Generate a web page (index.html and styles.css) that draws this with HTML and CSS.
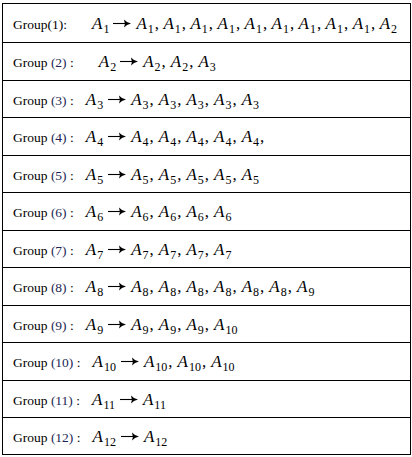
FILE: index.html
```html
<!DOCTYPE html>
<html>
<head>
<meta charset="utf-8">
<link rel="stylesheet" href="styles.css">
</head>
<body>
<div class="table">
  <div class="row r38"><span class="lbl">Group(1):</span><span class="m m1"><span class="v">A<sub>1</sub></span><svg class="ar ar0" width="18" height="10" viewBox="0 0 18 10"><path d="M0 5.5H15" stroke="#000" stroke-width="1.1"/><path d="M11 1.5Q13.5 4.6 18 5.5Q13.5 6.4 11 9.5Q12.6 5.5 11 1.5Z" fill="#000"/></svg><span class="v">A<sub>1</sub></span><span class="c">,</span><span class="v">A<sub>1</sub></span><span class="c">,</span><span class="v">A<sub>1</sub></span><span class="c">,</span><span class="v">A<sub>1</sub></span><span class="c">,</span><span class="v">A<sub>1</sub></span><span class="c">,</span><span class="v">A<sub>1</sub></span><span class="c">,</span><span class="v">A<sub>1</sub></span><span class="c">,</span><span class="v">A<sub>1</sub></span><span class="c">,</span><span class="v">A<sub>1</sub></span><span class="c">,</span><span class="v">A<sub>2</sub></span></span></div>
  <div class="row r37"><span class="lbl">Group <span class="n">(2)</span> :</span><span class="m m2"><span class="v">A<sub>2</sub></span><svg class="ar ar0" width="18" height="10" viewBox="0 0 18 10"><path d="M0 5.5H15" stroke="#000" stroke-width="1.1"/><path d="M11 1.5Q13.5 4.6 18 5.5Q13.5 6.4 11 9.5Q12.6 5.5 11 1.5Z" fill="#000"/></svg><span class="v">A<sub>2</sub></span><span class="c">,</span><span class="v">A<sub>2</sub></span><span class="c">,</span><span class="v">A<sub>3</sub></span></span></div>
  <div class="row r36"><span class="lbl">Group <span class="n">(3)</span> :</span><span class="m"><span class="v">A<sub>3</sub></span><svg class="ar" width="18" height="10" viewBox="0 0 18 10"><path d="M0 5.5H15" stroke="#000" stroke-width="1.1"/><path d="M11 1.5Q13.5 4.6 18 5.5Q13.5 6.4 11 9.5Q12.6 5.5 11 1.5Z" fill="#000"/></svg><span class="v">A<sub>3</sub></span><span class="c">,</span><span class="v">A<sub>3</sub></span><span class="c">,</span><span class="v">A<sub>3</sub></span><span class="c">,</span><span class="v">A<sub>3</sub></span><span class="c">,</span><span class="v">A<sub>3</sub></span></span></div>
  <div class="row r37"><span class="lbl">Group <span class="n">(4)</span> :</span><span class="m"><span class="v">A<sub>4</sub></span><svg class="ar" width="18" height="10" viewBox="0 0 18 10"><path d="M0 5.5H15" stroke="#000" stroke-width="1.1"/><path d="M11 1.5Q13.5 4.6 18 5.5Q13.5 6.4 11 9.5Q12.6 5.5 11 1.5Z" fill="#000"/></svg><span class="v">A<sub>4</sub></span><span class="c">,</span><span class="v">A<sub>4</sub></span><span class="c">,</span><span class="v">A<sub>4</sub></span><span class="c">,</span><span class="v">A<sub>4</sub></span><span class="c">,</span><span class="v">A<sub>4</sub></span><span class="c">,</span></span></div>
  <div class="row r36"><span class="lbl">Group <span class="n">(5)</span> :</span><span class="m"><span class="v">A<sub>5</sub></span><svg class="ar" width="18" height="10" viewBox="0 0 18 10"><path d="M0 5.5H15" stroke="#000" stroke-width="1.1"/><path d="M11 1.5Q13.5 4.6 18 5.5Q13.5 6.4 11 9.5Q12.6 5.5 11 1.5Z" fill="#000"/></svg><span class="v">A<sub>5</sub></span><span class="c">,</span><span class="v">A<sub>5</sub></span><span class="c">,</span><span class="v">A<sub>5</sub></span><span class="c">,</span><span class="v">A<sub>5</sub></span><span class="c">,</span><span class="v">A<sub>5</sub></span></span></div>
  <div class="row r37"><span class="lbl">Group <span class="n">(6)</span> :</span><span class="m"><span class="v">A<sub>6</sub></span><svg class="ar" width="18" height="10" viewBox="0 0 18 10"><path d="M0 5.5H15" stroke="#000" stroke-width="1.1"/><path d="M11 1.5Q13.5 4.6 18 5.5Q13.5 6.4 11 9.5Q12.6 5.5 11 1.5Z" fill="#000"/></svg><span class="v">A<sub>6</sub></span><span class="c">,</span><span class="v">A<sub>6</sub></span><span class="c">,</span><span class="v">A<sub>6</sub></span><span class="c">,</span><span class="v">A<sub>6</sub></span></span></div>
  <div class="row r36"><span class="lbl">Group <span class="n">(7)</span> :</span><span class="m"><span class="v">A<sub>7</sub></span><svg class="ar" width="18" height="10" viewBox="0 0 18 10"><path d="M0 5.5H15" stroke="#000" stroke-width="1.1"/><path d="M11 1.5Q13.5 4.6 18 5.5Q13.5 6.4 11 9.5Q12.6 5.5 11 1.5Z" fill="#000"/></svg><span class="v">A<sub>7</sub></span><span class="c">,</span><span class="v">A<sub>7</sub></span><span class="c">,</span><span class="v">A<sub>7</sub></span><span class="c">,</span><span class="v">A<sub>7</sub></span></span></div>
  <div class="row r37"><span class="lbl">Group <span class="n">(8)</span> :</span><span class="m"><span class="v">A<sub>8</sub></span><svg class="ar" width="18" height="10" viewBox="0 0 18 10"><path d="M0 5.5H15" stroke="#000" stroke-width="1.1"/><path d="M11 1.5Q13.5 4.6 18 5.5Q13.5 6.4 11 9.5Q12.6 5.5 11 1.5Z" fill="#000"/></svg><span class="v">A<sub>8</sub></span><span class="c">,</span><span class="v">A<sub>8</sub></span><span class="c">,</span><span class="v">A<sub>8</sub></span><span class="c">,</span><span class="v">A<sub>8</sub></span><span class="c">,</span><span class="v">A<sub>8</sub></span><span class="c">,</span><span class="v">A<sub>8</sub></span><span class="c">,</span><span class="v">A<sub>9</sub></span></span></div>
  <div class="row r36"><span class="lbl">Group <span class="n">(9)</span> :</span><span class="m"><span class="v">A<sub>9</sub></span><svg class="ar" width="18" height="10" viewBox="0 0 18 10"><path d="M0 5.5H15" stroke="#000" stroke-width="1.1"/><path d="M11 1.5Q13.5 4.6 18 5.5Q13.5 6.4 11 9.5Q12.6 5.5 11 1.5Z" fill="#000"/></svg><span class="v">A<sub>9</sub></span><span class="c">,</span><span class="v">A<sub>9</sub></span><span class="c">,</span><span class="v">A<sub>9</sub></span><span class="c">,</span><span class="v">A<sub>10</sub></span></span></div>
  <div class="row r37"><span class="lbl">Group <span class="n">(10)</span> :</span><span class="m"><span class="v">A<sub>10</sub></span><svg class="ar" width="18" height="10" viewBox="0 0 18 10"><path d="M0 5.5H15" stroke="#000" stroke-width="1.1"/><path d="M11 1.5Q13.5 4.6 18 5.5Q13.5 6.4 11 9.5Q12.6 5.5 11 1.5Z" fill="#000"/></svg><span class="v">A<sub>10</sub></span><span class="c">,</span><span class="v">A<sub>10</sub></span><span class="c">,</span><span class="v">A<sub>10</sub></span></span></div>
  <div class="row r36"><span class="lbl">Group <span class="n">(11)</span> :</span><span class="m"><span class="v">A<sub>11</sub></span><svg class="ar" width="18" height="10" viewBox="0 0 18 10"><path d="M0 5.5H15" stroke="#000" stroke-width="1.1"/><path d="M11 1.5Q13.5 4.6 18 5.5Q13.5 6.4 11 9.5Q12.6 5.5 11 1.5Z" fill="#000"/></svg><span class="v">A<sub>11</sub></span></span></div>
  <div class="row r36 last"><span class="lbl">Group <span class="n">(12)</span> :</span><span class="m"><span class="v">A<sub>12</sub></span><svg class="ar" width="18" height="10" viewBox="0 0 18 10"><path d="M0 5.5H15" stroke="#000" stroke-width="1.1"/><path d="M11 1.5Q13.5 4.6 18 5.5Q13.5 6.4 11 9.5Q12.6 5.5 11 1.5Z" fill="#000"/></svg><span class="v">A<sub>12</sub></span></span></div>
</div>
</body>
</html>
```

FILE: styles.css
```css
html, body {
  margin: 0;
  padding: 0;
  background: #ffffff;
}
body {
  padding: 3px 0 0 2px;
  font-family: "Liberation Serif", "Times New Roman", serif;
  color: #000;
}
.table {
  width: 407px;
  border: 1px solid #000;
}
.row {
  padding-top: 3px;
  padding-left: 10px;
  font-size: 13.5px;
  border-bottom: 1px solid #000;
  white-space: nowrap;
}
.r38 { line-height: 35px; }
.r37 { line-height: 34px; }
.r36 { line-height: 33px; }
.row.last {
  border-bottom: none;
}
.n {
  color: #231f55;
}
.m {
  font-size: 17px;
  line-height: 20px;
  margin-left: 12px;
}
.m1 {
  margin-left: 25px;
}
.m2 {
  margin-left: 25px;
}
.v {
  font-style: italic;
}
.v sub {
  font-style: normal;
  font-size: 12px;
  vertical-align: -4px;
  line-height: 0;
  margin-left: 1px;
}
.c {
  margin-left: 1px;
  margin-right: 5px;
}
.m1 .c {
  margin-right: 4.4px;
}
.ar {
  vertical-align: 1px;
  margin: 0 5px 0 5px;
}
.ar.ar0 {
  margin: 0 5px 0 4px;
}
```
